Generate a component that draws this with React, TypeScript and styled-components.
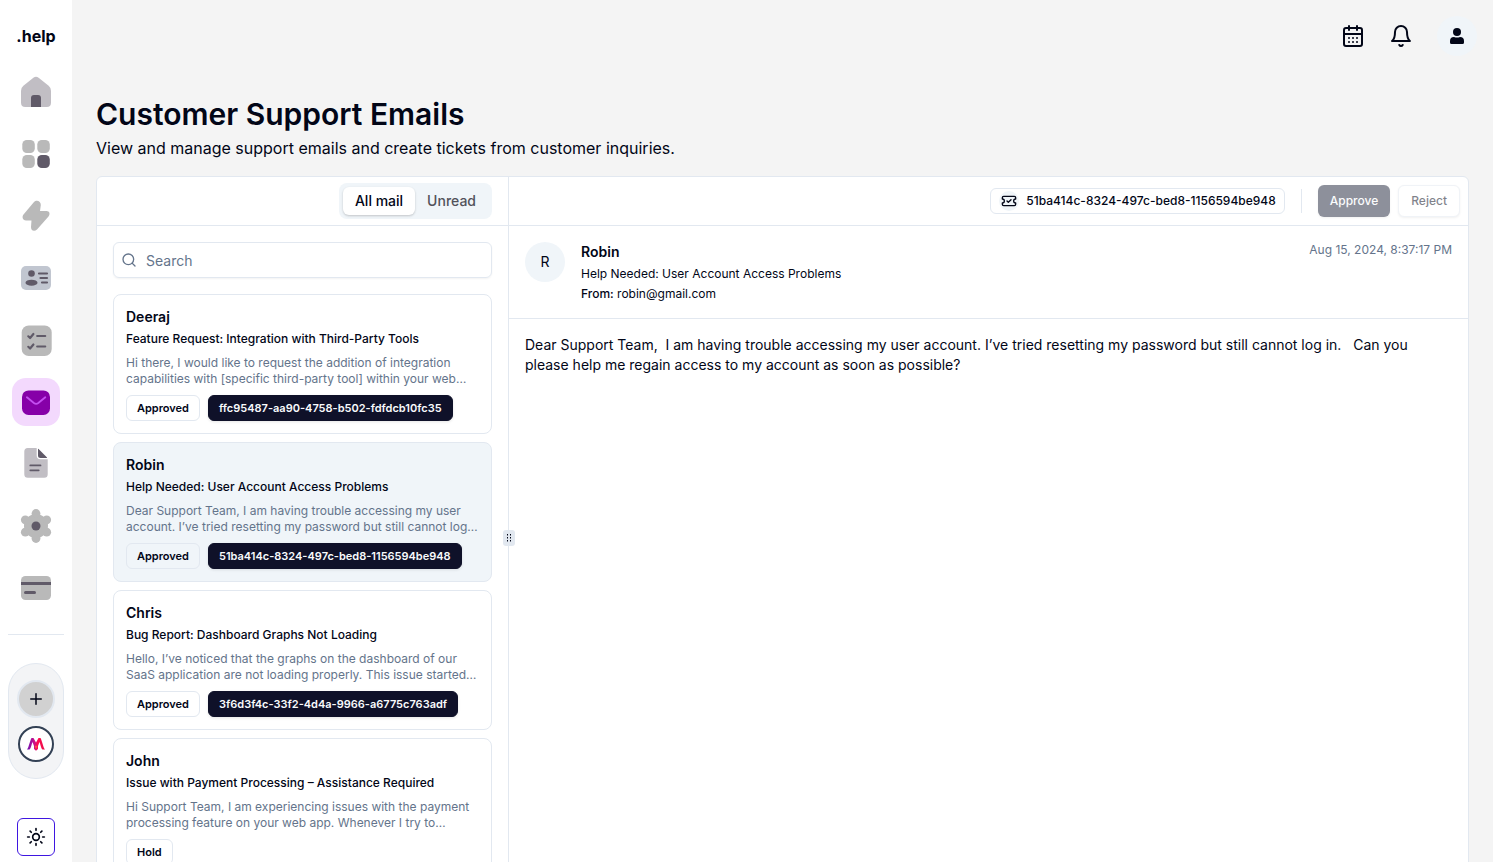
import React, { useState } from "react";
import styled, { createGlobalStyle } from "styled-components";
import { Bell, CalendarDays, Plus, Search, Sun, TicketCheck } from "lucide-react";

const color = {
  ink: "#020617",
  primary: "#0f1129",
  muted: "#64748b",
  line: "#e2e8f0",
  soft: "#f0f5f9",
  page: "#f4f4f4",
  grey: "#b9b9b9",
  dark: "#605a68",
};

const GlobalStyle = createGlobalStyle`
  *, *::before, *::after { box-sizing: border-box; }
  body {
    margin: 0;
    background: ${color.page};
    color: ${color.ink};
    font-family: Inter, "Liberation Sans", sans-serif;
    font-size: 14px;
    line-height: 20px;
  }
  h1, h2, h3, p { margin: 0; }
  button, input { font: inherit; color: inherit; }
  button { cursor: pointer; }
`;

const Shell = styled.div`
  display: flex;
  height: 100vh;
  overflow: hidden;
`;

const Sidebar = styled.aside`
  flex: none;
  display: flex;
  flex-direction: column;
  align-items: center;
  width: 72px;
  padding: 24px 8px 6px;
  background: #fff;
`;

const Brand = styled.a`
  font-size: 16px;
  line-height: 24px;
  font-weight: 700;
  color: inherit;
  text-decoration: none;
`;

const Nav = styled.nav`
  display: flex;
  flex-direction: column;
  gap: 14px;
  margin-top: 20px;
`;

const NavLink = styled.a<{ $active?: boolean }>`
  display: grid;
  place-items: center;
  width: 48px;
  height: 48px;
  border-radius: 14px;
  background: ${(p) => (p.$active ? "#f3d9fd" : "transparent")};
`;

const Rule = styled.hr`
  flex: none;
  width: 100%;
  height: 1px;
  margin: 22px 0 28px;
  border: 0;
  background: ${color.line};
`;

const Teams = styled.div`
  display: flex;
  flex-direction: column;
  align-items: center;
  gap: 8px;
  width: 100%;
  padding: 16px 0;
  border: 1px solid ${color.line};
  border-radius: 28px;
  background: #f3f4f6;
`;

const AddTeam = styled.button`
  display: grid;
  place-items: center;
  width: 38px;
  height: 38px;
  padding: 0;
  border: 2px solid ${color.line};
  border-radius: 50%;
  background: #d1d1d1;
`;

const Team = styled.button`
  display: grid;
  place-items: center;
  width: 36px;
  height: 36px;
  padding: 0;
  border: 2px solid #334155;
  border-radius: 50%;
  background: #fff;
`;

const ThemeToggle = styled.button`
  display: grid;
  place-items: center;
  flex: none;
  width: 38px;
  height: 38px;
  margin-top: auto;
  padding: 0;
  border: 1px solid #3f16e0;
  border-radius: 6px;
  background: #fff;
`;

const Main = styled.main`
  flex: 1;
  min-width: 0;
  padding: 0 24px;
`;

const TopBar = styled.header`
  display: flex;
  align-items: center;
  justify-content: flex-end;
  gap: 24px;
  height: 72px;
  margin-right: -8px;
`;

const IconButton = styled.button`
  display: grid;
  place-items: center;
  padding: 0;
  border: 0;
  background: none;
`;

const Profile = styled(IconButton)`
  width: 40px;
  height: 40px;
  border-radius: 50%;
  background: ${color.soft};
`;

const Title = styled.h1`
  margin-top: 24px;
  font-size: 30px;
  line-height: 36px;
  font-weight: 600;
`;

const Subtitle = styled.p`
  margin-top: 4px;
  font-size: 16px;
  line-height: 24px;
`;

const Panel = styled.section`
  display: flex;
  height: calc(100vh - 138px);
  margin-top: 16px;
  border: 1px solid ${color.line};
  border-radius: 6px;
  background: #fff;
`;

const ListPane = styled.div`
  flex: 3 1 0;
  min-width: 0;
`;

const Divider = styled.div`
  position: relative;
  width: 1px;
  background: ${color.line};
`;

const Grip = styled.span`
  position: absolute;
  top: 50%;
  left: 50%;
  display: grid;
  place-items: center;
  width: 12px;
  height: 16px;
  border-radius: 3px;
  background: ${color.line};
  transform: translate(-50%, -50%);
`;

const DetailPane = styled.div`
  flex: 7 1 0;
  min-width: 0;
`;

const PaneBar = styled.div<{ $pad: number }>`
  display: flex;
  align-items: center;
  justify-content: flex-end;
  height: 49px;
  padding: 0 ${(p) => p.$pad}px;
  border-bottom: 1px solid ${color.line};
`;

const Tabs = styled.div`
  display: flex;
  padding: 4px;
  border-radius: 8px;
  background: ${color.soft};
`;

const Tab = styled.button<{ $active: boolean }>`
  padding: 4px 12px;
  border: 0;
  border-radius: 6px;
  font-weight: 500;
  color: ${(p) => (p.$active ? color.ink : "#52525b")};
  background: ${(p) => (p.$active ? "#fff" : "transparent")};
  box-shadow: ${(p) => (p.$active ? "0 1px 3px rgba(0,0,0,.1), 0 1px 2px rgba(0,0,0,.1)" : "none")};
`;

const ListBody = styled.div`
  display: flex;
  flex-direction: column;
  gap: 16px;
  padding: 16px;
`;

const SearchBox = styled.label`
  display: flex;
  align-items: center;
  gap: 9px;
  height: 36px;
  padding: 0 7px;
  border: 1px solid ${color.line};
  border-radius: 6px;
  color: ${color.muted};
  box-shadow: 0 1px 2px rgba(0, 0, 0, 0.05);
`;

const SearchInput = styled.input`
  flex: 1;
  min-width: 0;
  padding: 2px 0 0;
  border: 0;
  outline: 0;
  background: none;
  &::placeholder { color: ${color.muted}; opacity: 1; }
`;

const Cards = styled.div`
  display: flex;
  flex-direction: column;
  gap: 8px;
`;

const Card = styled.button<{ $selected: boolean }>`
  display: block;
  width: 100%;
  padding: 12px;
  border: 1px solid ${color.line};
  border-radius: 8px;
  text-align: left;
  background: ${(p) => (p.$selected ? color.soft : "#fff")};
`;

const Sender = styled.h2`
  font-size: 14px;
  line-height: 20px;
  font-weight: 600;
`;

const Subject = styled.p<{ $strong?: boolean }>`
  margin-top: 4px;
  font-size: 12px;
  line-height: 16px;
  font-weight: ${(p) => (p.$strong ? 500 : 400)};
`;

const Preview = styled.p`
  margin: 8px 0;
  font-size: 12px;
  line-height: 16px;
  color: ${color.muted};
`;

const Badges = styled.div`
  display: flex;
  gap: 8px;
`;

const Badge = styled.span<{ $solid?: boolean }>`
  padding: 4px 10px;
  border: 1px solid ${(p) => (p.$solid ? color.primary : color.line)};
  border-radius: 6px;
  font-size: 11px;
  line-height: 16px;
  font-weight: 600;
  white-space: nowrap;
  color: ${(p) => (p.$solid ? "#f8fafc" : color.ink)};
  background: ${(p) => (p.$solid ? color.primary : "transparent")};
  box-shadow: ${(p) => (p.$solid ? "0 1px 3px rgba(0,0,0,.1)" : "none")};
`;

const TicketButton = styled.button`
  display: flex;
  align-items: center;
  gap: 7px;
  height: 26px;
  padding: 0 8px;
  border: 1px solid ${color.line};
  border-radius: 6px;
  font-size: 12px;
  font-weight: 500;
  background: #fff;
`;

const TicketIcon = styled.span`
  display: grid;
  place-items: center;
  width: 20px;
  height: 20px;
  border-radius: 50%;
  background: ${color.soft};
`;

const Separator = styled.span`
  width: 1px;
  height: 24px;
  margin: 0 16px;
  background: ${color.line};
`;

const Action = styled.button<{ $solid?: boolean }>`
  height: 32px;
  padding: 0 12px;
  border: ${(p) => (p.$solid ? "0" : `1px solid ${color.line}`)};
  border-radius: 6px;
  font-size: 12px;
  font-weight: 500;
  color: ${(p) => (p.$solid ? "#f8fafc" : color.ink)};
  background: ${(p) => (p.$solid ? "#1d2339" : "#fff")};
  box-shadow: 0 1px 2px rgba(0, 0, 0, 0.1);
  opacity: 0.5;
  & + & { margin-left: 8px; }
`;

const MessageHead = styled.header`
  display: flex;
  align-items: flex-start;
  gap: 16px;
  padding: 16px;
  border-bottom: 1px solid ${color.line};
`;

const Avatar = styled.span`
  display: grid;
  place-items: center;
  width: 40px;
  height: 40px;
  border-radius: 50%;
  background: ${color.soft};
`;

const Sent = styled.time`
  margin-left: auto;
  font-size: 12px;
  line-height: 16px;
  color: ${color.muted};
`;

const Strong = styled.span`
  font-weight: 500;
`;

const MessageBody = styled.p`
  padding: 16px;
  white-space: pre-wrap;
`;

const Icon = ({ children }: { children: React.ReactNode }) => (
  <svg width="36" height="36" viewBox="0 0 36 36" fill="none" aria-hidden="true">
    {children}
  </svg>
);

const navItems = [
  {
    label: "Home",
    art: (
      <>
        <path d="M15.4 3.8q2.6-1.9 5.2 0l10 8q2.4 2 2.4 5v12q0 4.200-4.200 4.200H7.200Q3 33 3 28.800v-12q0-3 2.400-5z" fill="#c1bec4" />
        <path d="M13 33v-9q0-3 3-3h4q3 0 3 3v9z" fill={color.dark} />
      </>
    ),
  },
  {
    label: "Dashboard",
    art: (
      <>
        <rect x="4.300" y="4" width="12.500" height="13" rx="4.500" fill={color.grey} />
        <rect x="19.300" y="4" width="12.500" height="13" rx="4.500" fill={color.grey} />
        <rect x="4.300" y="19" width="12.500" height="13" rx="4.500" fill={color.grey} />
        <rect x="19.300" y="19" width="12.500" height="13" rx="4.500" fill={color.dark} />
      </>
    ),
  },
  {
    label: "Automations",
    art: (
      <path
        d="M16 4 5.500 16.500C3.500 19 5 22.500 8 22.500h5.500L13 29c0 4 3.500 5 6 2.500l11.500-13c2-2.500 1-5.500-2-5.500H22l.8-6C23 3 18.500 1.200 16 4z"
        fill={color.grey}
      />
    ),
  },
  {
    label: "Contacts",
    art: (
      <>
        <rect x="3" y="6" width="30" height="24" rx="5" fill="#c1c6d0" />
        <circle cx="13.500" cy="13.500" r="3.300" fill={color.dark} />
        <ellipse cx="13.500" cy="22.700" rx="6" ry="3" fill={color.dark} />
        <path d="M21 13.500h8M22.500 18h6.500M24 22.500h5" stroke={color.dark} strokeWidth="2.200" strokeLinecap="round" />
      </>
    ),
  },
  {
    label: "Tasks",
    art: (
      <>
        <rect x="3.700" y="3.500" width="30" height="30.500" rx="7" fill={color.grey} />
        <path
          d="m10.300 14.300 1.800 1.700 3.300-4M10.300 24.800l1.800 1.700 3.300-4M19.200 14h8M19.200 24.500h8"
          stroke={color.dark}
          strokeWidth="2.200"
          strokeLinecap="round"
          strokeLinejoin="round"
        />
      </>
    ),
  },
  {
    label: "Emails",
    active: true,
    art: (
      <>
        <rect x="4" y="6.400" width="28" height="24.600" rx="6.500" fill="#8600a8" />
        <path d="m8.900 13.200 7 5.800q2.200 1.700 4.400 0l7-5.800" stroke="#c44ff0" strokeWidth="1.800" strokeLinecap="round" />
      </>
    ),
  },
  {
    label: "Documents",
    art: (
      <>
        <path d="M18.700 2v7.500q0 3.800 3.800 3.800h7.200v14.900q0 3.500-3.500 3.500H9.800q-3.500 0-3.500-3.500V5.500Q6.300 2 9.800 2z" fill="#c1bec4" />
        <path d="M20 3q0-.6.600 0l8.200 8.200q.7.800 0 .8h-6.300Q20 12 20 9.500z" fill={color.dark} />
        <path d="M12.300 19.400h10.200M12.300 24.300h8.400" stroke={color.dark} strokeWidth="1.800" strokeLinecap="round" />
      </>
    ),
  },
  {
    label: "Settings",
    art: (
      <>
        <g fill={color.grey}>
          <circle cx="18" cy="18" r="12" />
          <circle cx="18" cy="5.500" r="4.400" />
          <circle cx="18" cy="30.500" r="4.400" />
          <circle cx="7.300" cy="11.800" r="4.400" />
          <circle cx="28.700" cy="11.800" r="4.400" />
          <circle cx="7.300" cy="24.200" r="4.400" />
          <circle cx="28.700" cy="24.200" r="4.400" />
        </g>
        <circle cx="18" cy="18" r="4.500" fill={color.dark} />
      </>
    ),
  },
  {
    label: "Billing",
    art: (
      <>
        <rect x="3" y="6" width="30" height="24" rx="4.500" fill={color.grey} />
        <path d="M3 12h30v3H3z" fill={color.dark} />
        <path d="M7.500 22.500h9" stroke={color.dark} strokeWidth="3" strokeLinecap="round" />
      </>
    ),
  },
];

const emails = [
  {
    name: "Deeraj",
    subject: "Feature Request: Integration with Third-Party Tools",
    text: "Hi there, I would like to request the addition of integration capabilities with [specific third-party tool] within your web…",
    status: "Approved",
    ticket: "ffc95487-aa90-4758-b502-fdfdcb10fc35",
  },
  {
    name: "Robin",
    subject: "Help Needed: User Account Access Problems",
    text: "Dear Support Team, I am having trouble accessing my user account. I’ve tried resetting my password but still cannot log…",
    status: "Approved",
    ticket: "51ba414c-8324-497c-bed8-1156594be948",
  },
  {
    name: "Chris",
    subject: "Bug Report: Dashboard Graphs Not Loading",
    text: "Hello, I’ve noticed that the graphs on the dashboard of our SaaS application are not loading properly. This issue started…",
    status: "Approved",
    ticket: "3f6d3f4c-33f2-4d4a-9966-a6775c763adf",
  },
  {
    name: "John",
    subject: "Issue with Payment Processing – Assistance Required",
    text: "Hi Support Team, I am experiencing issues with the payment processing feature on your web app. Whenever I try to…",
    status: "Hold",
  },
];

export default function App() {
  const [tab, setTab] = useState("All mail");
  const [selected, setSelected] = useState("Robin");

  return (
    <>
      <GlobalStyle />
      <Shell>
        <Sidebar>
          <Brand href="#">.help</Brand>
          <Nav aria-label="Main">
            {navItems.map((item) => (
              <NavLink key={item.label} href="#" aria-label={item.label} $active={item.active}>
                <Icon>{item.art}</Icon>
              </NavLink>
            ))}
          </Nav>
          <Rule />
          <Teams>
            <AddTeam aria-label="Add team">
              <Plus size={18} strokeWidth={2} />
            </AddTeam>
            <Team aria-label="Team">
              <svg width="18" height="14" viewBox="0 0 18 14" fill="none" aria-hidden="true">
                <defs>
                  <linearGradient id="team" x1="0" x2="18" y1="0" y2="0" gradientUnits="userSpaceOnUse">
                    <stop stopColor="#6a0fb4" />
                    <stop offset=".4" stopColor="#c8108a" />
                    <stop offset=".6" stopColor="#ff0a50" />
                    <stop offset="1" stopColor="#e8104a" />
                  </linearGradient>
                </defs>
                <path
                  d="M0 12.500C1.500 11.500 2.800 4 4.500 1h2L9 5.500 11.500 1h2c1.700 3 3 10.500 4.500 11.500h-2.500C14 11.500 13.500 7.500 12.500 5L11 9v3L9 13.700 7 12V9L5.500 5C4.500 7.500 4 11.500 2.500 12.500z"
                  fill="url(#team)"
                />
                <path d="M7.800 9.500 9 8.300l1.200 1.200L9 12z" fill="#ff5a3c" />
              </svg>
            </Team>
          </Teams>
          <ThemeToggle aria-label="Toggle theme">
            <Sun size={20} />
          </ThemeToggle>
        </Sidebar>
        <Main>
          <TopBar>
            <IconButton aria-label="Calendar">
              <CalendarDays size={24} />
            </IconButton>
            <IconButton aria-label="Notifications">
              <svg width="24" height="24" viewBox="0 0 24 24" fill="none" stroke="currentColor" strokeWidth="2" strokeLinecap="round" strokeLinejoin="round" aria-hidden="true">
                <path d="M6 8a6 6 0 0 1 12 0c0 7 3 9 3 9H3s3-2 3-9" />
                <path d="M10.300 21a1.940 1.940 0 0 0 3.400 0" />
              </svg>
            </IconButton>
            <Profile aria-label="Profile">
              <svg width="16" height="18" viewBox="0 0 16 18" fill="currentColor" aria-hidden="true">
                <circle cx="8" cy="5" r="4" />
                <path d="M1 14q0-4 4-4 3 1 6 0 4 0 4 4v1.500Q15 17 13.500 17h-11Q1 17 1 15.500z" />
              </svg>
            </Profile>
          </TopBar>
          <Title>Customer Support Emails</Title>
          <Subtitle>View and manage support emails and create tickets from customer inquiries.</Subtitle>
          <Panel>
            <ListPane>
              <PaneBar $pad={16}>
                <Tabs role="tablist">
                  {["All mail", "Unread"].map((name) => (
                    <Tab key={name} role="tab" aria-selected={tab === name} $active={tab === name} onClick={() => setTab(name)}>
                      {name}
                    </Tab>
                  ))}
                </Tabs>
              </PaneBar>
              <ListBody>
                <SearchBox>
                  <Search size={16} />
                  <SearchInput type="text" placeholder="Search" aria-label="Search" />
                </SearchBox>
                <Cards>
                  {emails.map((mail) => (
                    <Card key={mail.name} $selected={mail.name === selected} onClick={() => setSelected(mail.name)}>
                      <Sender>{mail.name}</Sender>
                      <Subject $strong>{mail.subject}</Subject>
                      <Preview>{mail.text}</Preview>
                      <Badges>
                        <Badge>{mail.status}</Badge>
                        {mail.ticket && <Badge $solid>{mail.ticket}</Badge>}
                      </Badges>
                    </Card>
                  ))}
                </Cards>
              </ListBody>
            </ListPane>
            <Divider>
              <Grip>
                <svg width="6" height="8" viewBox="0 0 6 8" fill="currentColor" aria-hidden="true">
                  <path d="M1 0h1v1.500H1zM4 0h1v1.500H4zM1 3h1v1.500H1zM4 3h1v1.500H4zM1 6h1v1.500H1zM4 6h1v1.500H4z" />
                </svg>
              </Grip>
            </Divider>
            <DetailPane>
              <PaneBar $pad={8}>
                <TicketButton>
                  <TicketIcon>
                    <TicketCheck size={16} />
                  </TicketIcon>
                  51ba414c-8324-497c-bed8-1156594be948
                </TicketButton>
                <Separator />
                <Action $solid disabled>
                  Approve
                </Action>
                <Action disabled>Reject</Action>
              </PaneBar>
              <MessageHead>
                <Avatar>R</Avatar>
                <div>
                  <Sender>Robin</Sender>
                  <Subject>Help Needed: User Account Access Problems</Subject>
                  <Subject>
                    <Strong>From:</Strong> robin@gmail.com
                  </Subject>
                </div>
                <Sent>Aug 15, 2024, 8:37:17 PM</Sent>
              </MessageHead>
              <MessageBody>
                {"Dear Support Team,  I am having trouble accessing my user account. I’ve tried resetting my password but still cannot log in.   Can you please help me regain access to my account as soon as possible?"}
              </MessageBody>
            </DetailPane>
          </Panel>
        </Main>
      </Shell>
    </>
  );
}
